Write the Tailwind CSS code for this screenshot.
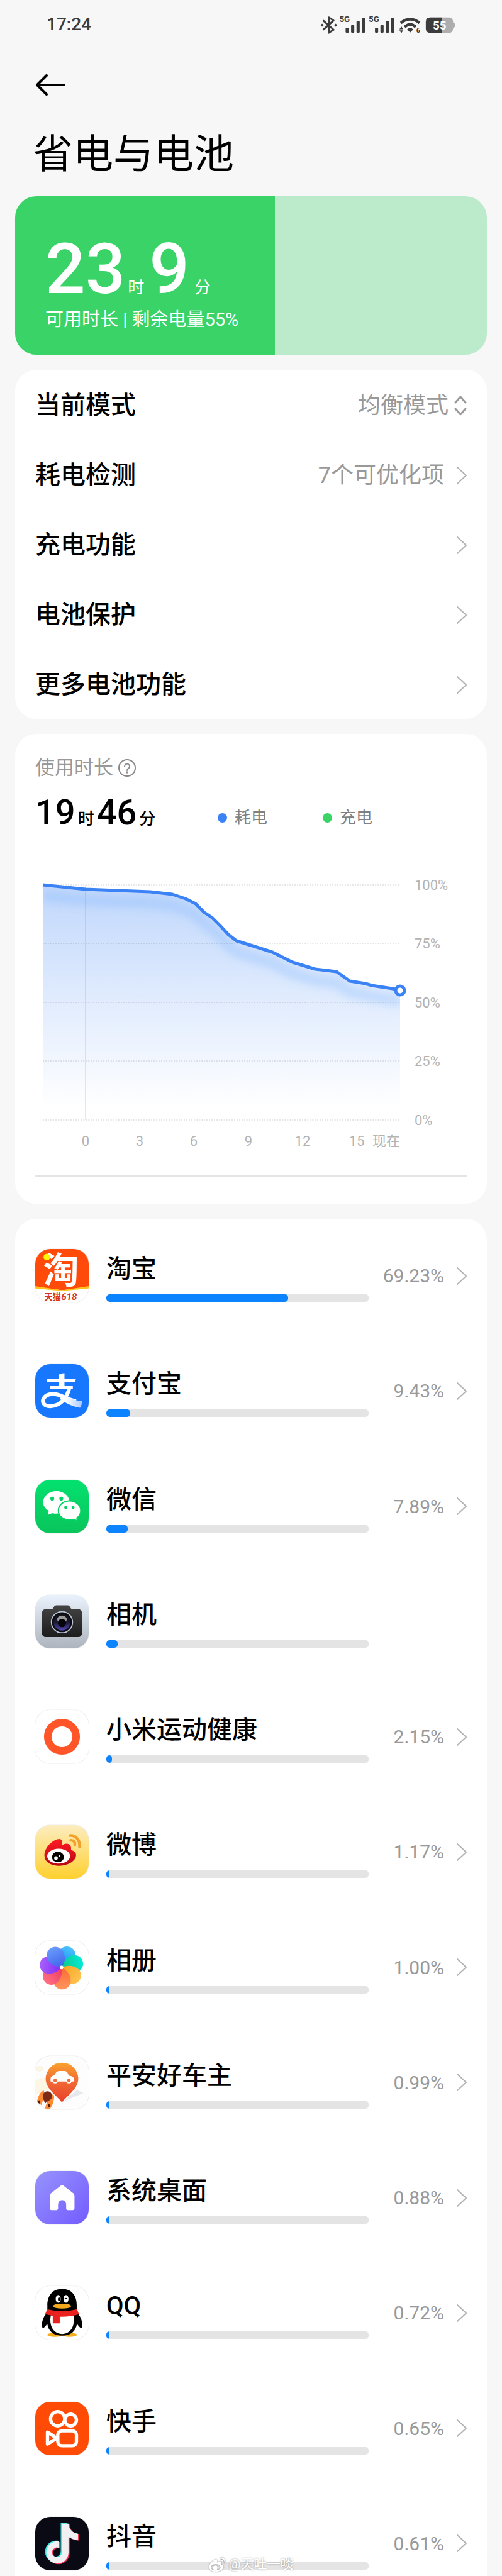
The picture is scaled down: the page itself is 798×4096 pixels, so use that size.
<!DOCTYPE html>
<html lang="zh-CN">
<head>
    <meta charset="UTF-8">
    <meta name="viewport" content="width=device-width, initial-scale=1.0">
    <title>省电与电池</title>
    <script src="https://cdn.jsdelivr.net/npm/@tailwindcss/browser@4"></script>
</head>
<body class="bg-[#f7f7f7] text-black font-['Roboto','Noto_Sans_CJK_SC',sans-serif]">
    <!-- Icon sprites -->
    <svg class="absolute size-0" aria-hidden="true">
        <defs>
            <linearGradient id="g-wechat" x1="0" y1="0" x2="0" y2="1"><stop offset="0" stop-color="#03e16f"/><stop offset="1" stop-color="#0ac55b"/></linearGradient>
            <linearGradient id="g-ribbon" gradientUnits="userSpaceOnUse" x1="50" y1="0" x2="334" y2="0"><stop offset="0" stop-color="#fff"/><stop offset=".6" stop-color="#fff"/><stop offset="1" stop-color="#a9cbff"/></linearGradient>
            <linearGradient id="g-camera" x1="0" y1="0" x2="0" y2="1"><stop offset="0" stop-color="#eaf2fd"/><stop offset="1" stop-color="#adb4bd"/></linearGradient>
            <linearGradient id="g-body" x1="0" y1="0" x2="0" y2="1"><stop offset="0" stop-color="#444"/><stop offset="1" stop-color="#1d1d1d"/></linearGradient>
            <linearGradient id="g-lens" x1="0" y1="0" x2="0" y2="1"><stop offset="0" stop-color="#111"/><stop offset=".5" stop-color="#1b1736"/><stop offset="1" stop-color="#5148b4"/></linearGradient>
            <linearGradient id="g-weibo" x1="0" y1="0" x2="0" y2="1"><stop offset="0" stop-color="#fdedc0"/><stop offset="1" stop-color="#fed02f"/></linearGradient>
            <linearGradient id="g-flame" x1="0" y1="0" x2="0" y2="1"><stop offset="0" stop-color="#ff1a24"/><stop offset="1" stop-color="#b90811"/></linearGradient>
            <linearGradient id="g-pin" x1="0" y1="0" x2="0" y2="1"><stop offset="0" stop-color="#fba22d"/><stop offset=".45" stop-color="#f06c35"/><stop offset="1" stop-color="#e8402a"/></linearGradient>
            <linearGradient id="g-home" x1="0" y1="0" x2="1" y2="1"><stop offset="0" stop-color="#9793fd"/><stop offset="1" stop-color="#735bff"/></linearGradient>
            <linearGradient id="p-sky" x1="0" y1="0" x2="0" y2="1"><stop offset="0" stop-color="#4fc1fb"/><stop offset="1" stop-color="#068cf8"/></linearGradient>
            <linearGradient id="p-teal" x1="0" y1="0" x2="0" y2="1"><stop offset="0" stop-color="#04ead9"/><stop offset="1" stop-color="#0cc684"/></linearGradient>
            <linearGradient id="p-yellow" x1="0" y1="0" x2="0" y2="1"><stop offset="0" stop-color="#ffc353"/><stop offset="1" stop-color="#f9a41d"/></linearGradient>
            <linearGradient id="p-orange" x1="0" y1="0" x2="0" y2="1"><stop offset="0" stop-color="#ff955d"/><stop offset="1" stop-color="#fb6a35"/></linearGradient>
            <linearGradient id="p-pink" x1="0" y1="0" x2="0" y2="1"><stop offset="0" stop-color="#ff7184"/><stop offset="1" stop-color="#ee3a5f"/></linearGradient>
            <linearGradient id="p-purple" x1="0" y1="0" x2="0" y2="1"><stop offset="0" stop-color="#a960fd"/><stop offset="1" stop-color="#812df4"/></linearGradient>
            <linearGradient id="p-blue" x1="0" y1="0" x2="0" y2="1"><stop offset="0" stop-color="#699bfd"/><stop offset="1" stop-color="#3f64ea"/></linearGradient>
            <path id="petal" d="M0 0C-34-20-64-56-63-95A62 62 0 0 1 61-98C64-62 46-22 0 0Z"/>
            <path id="note" d="M191 47h48c2 40 30 70 68 72v44c-26 0-50-9-68-22v112a80 80 0 1 1-80-80l10 1v46a35 35 0 1 0 22 33Z"/>
        </defs>

        <symbol id="alipay" viewBox="0 0 384 384">
            <rect width="384" height="384" fill="#1777ff"/>
            <path d="M84 104H292Q290 128 282 128H84ZM170 78Q176 66 210 66V170H170ZM108 158H270V178H108Z" fill="#fff"/>
            <path d="M246 168C230 240 186 300 106 303 58 303 46 268 62 244 84 208 146 206 204 236 232 250 268 262 292 268" fill="none" stroke="#fff" stroke-width="28"/>
            <path d="M196 220C240 246 290 264 334 264Q338 290 322 314C270 306 216 280 176 250Z" fill="url(#g-ribbon)"/>
        </symbol>

        <symbol id="wechat" viewBox="0 0 384 384">
            <rect width="384" height="384" fill="url(#g-wechat)"/>
            <path d="M152 81c53 0 95 36 95 81s-42 81-95 81q-16 0-28-4l-34 13 7-29C72 208 57 186 57 162c0-45 42-81 95-81Z" fill="#fff"/>
            <path d="M246 151c45 0 81 31 81 70 0 22-11 41-28 53l5 22-28-12q-14 5-30 5c-45 0-80-30-80-68s35-70 80-70Z" fill="#fff" stroke="#07d266" stroke-width="9"/>
            <g fill="#07d266"><circle cx="122" cy="135" r="14"/><circle cx="187" cy="135" r="14"/><circle cx="219" cy="199" r="11"/><circle cx="272" cy="199" r="11"/></g>
        </symbol>

        <symbol id="camera" viewBox="0 0 384 384">
            <rect width="384" height="384" fill="url(#g-camera)"/>
            <path d="M78 102H118Q128 100 132 90 138 74 152 74H232Q246 74 252 90 256 100 266 102H306Q336 102 336 132V272Q336 303 306 303H78Q48 303 48 272V132Q48 102 78 102Z" fill="url(#g-body)"/>
            <circle cx="192" cy="196" r="76" fill="#0c0c10" stroke="#b9c3d6" stroke-width="8"/>
            <circle cx="192" cy="196" r="60" fill="url(#g-lens)"/>
            <ellipse cx="192" cy="176" rx="34" ry="28" fill="#9a9a9a"/>
            <circle cx="192" cy="202" r="30" fill="#050508"/>
        </symbol>

        <symbol id="fitness" viewBox="0 0 384 384">
            <rect width="384" height="384" fill="#fff"/>
            <circle cx="192" cy="192" r="102" fill="none" stroke="#ff5529" stroke-width="54"/>
        </symbol>

        <symbol id="weibo" viewBox="0 0 384 384">
            <rect width="384" height="384" fill="url(#g-weibo)"/>
            <path d="M66 218C66 160 130 98 178 100 196 104 197 118 190 144 228 122 264 132 257 180 292 188 302 212 287 240 262 275 215 294 160 292 105 288 66 262 66 218Z" fill="url(#g-flame)"/>
            <ellipse cx="168" cy="223" rx="82" ry="54" fill="#fff"/>
            <ellipse cx="163" cy="229" rx="43" ry="38" fill="#000"/>
            <circle cx="149" cy="237" r="13" fill="#fff"/><circle cx="174" cy="223" r="6" fill="#fff"/>
            <path d="M249 75C294 72 322 108 318 155M255 109C276 108 288 122 284 144" fill="none" stroke="#f2a22c" stroke-width="20" stroke-linecap="round"/>
        </symbol>

        <symbol id="album" viewBox="0 0 384 384">
            <rect width="384" height="384" fill="#fff"/>
            <g transform="translate(189 191)">
                <use href="#petal" fill="url(#p-sky)" transform="rotate(24)"/>
                <use href="#petal" fill="url(#p-teal)" transform="rotate(75)"/>
                <use href="#petal" fill="url(#p-yellow)" transform="rotate(127)"/>
                <use href="#petal" fill="url(#p-orange)" transform="rotate(178)"/>
                <use href="#petal" fill="url(#p-pink)" transform="rotate(230)"/>
                <use href="#petal" fill="url(#p-purple)" transform="rotate(281)"/>
                <use href="#petal" fill="url(#p-blue)" transform="rotate(333)"/>
                <circle r="13" fill="#fff"/>
            </g>
        </symbol>

        <symbol id="pingan" viewBox="0 0 384 384">
            <rect width="384" height="384" fill="#fdfdfd"/>
            <ellipse cx="30" cy="92" rx="30" ry="20" fill="#fbf5e6"/><path d="M0 180Q40 150 84 160L96 240 0 280Z" fill="#fdf6e4"/>
            <path d="M196 330L300 245 345 268Z" fill="#e6e8ec"/>
            <path d="M192 335C170 298 75 240 75 165A117 117 0 0 1 309 165C309 240 214 298 192 335Z" fill="url(#g-pin)"/>
            <path d="M110 184V162Q112 144 136 140C152 112 160 108 180 108H208C228 108 236 124 241 142 270 142 284 160 280 184Z" fill="#fff"/>
            <circle cx="143" cy="176" r="22" fill="#fff"/><circle cx="242" cy="176" r="22" fill="#fff"/>
            <circle cx="143" cy="176" r="12" fill="#ef6c38"/><circle cx="242" cy="176" r="12" fill="#ef6c38"/>
            <path d="M12 330Q28 256 62 248L66 290Q56 316 44 354Z" fill="#ff8b32"/>
            <path d="M70 384Q78 326 126 276 140 280 134 312 128 354 104 384Z" fill="#ff8b32"/>
            <path d="M70 342C66 322 54 312 54 288A34 34 0 0 1 122 288C122 314 92 322 70 342Z" fill="#7d2b19"/>
            <ellipse cx="29" cy="330" rx="8" ry="12" fill="#531b0e"/><ellipse cx="99" cy="358" rx="9" ry="12" fill="#531b0e"/>
        </symbol>

        <symbol id="home" viewBox="0 0 384 384">
            <rect width="384" height="384" fill="url(#g-home)"/>
            <path d="M182 106Q193 98 204 106L274 160Q282 167 282 178V268Q282 281 268 281H235Q222 281 222 268V238A29 29 0 0 0 164 238V268Q164 281 150 281H118Q105 281 105 268V178Q105 167 113 160Z" fill="#fff"/>
        </symbol>

        <symbol id="qq" viewBox="0 0 384 384">
            <rect width="384" height="384" fill="#fff"/>
            <ellipse cx="140" cy="350" rx="54" ry="15" fill="#f6ad1b"/><ellipse cx="246" cy="350" rx="54" ry="15" fill="#f6ad1b"/>
            <path d="M87 190C54 220 42 270 52 300 62 304 76 286 86 270 96 326 130 356 193 356S290 326 300 270C310 286 324 304 334 300 344 270 332 220 298 190V140C300 66 260 20 193 20S86 66 87 140Z" fill="#000"/>
            <path d="M112 210H274C290 290 250 344 193 344S96 290 112 210Z" fill="#fff"/>
            <ellipse cx="165" cy="92" rx="18" ry="28" fill="#fff"/><ellipse cx="221" cy="92" rx="18" ry="28" fill="#fff"/>
            <ellipse cx="171" cy="94" rx="8" ry="13" fill="#000"/><path d="M210 94Q222 82 232 94" fill="none" stroke="#000" stroke-width="6"/>
            <ellipse cx="193" cy="144" rx="64" ry="18" fill="#f5a81c"/>
            <path d="M86 166Q193 196 300 166L314 202Q250 222 176 220V268H126V212Q90 208 72 200Z" fill="#e9221f"/>
        </symbol>

        <symbol id="kuaishou" viewBox="0 0 384 384">
            <rect width="384" height="384" fill="#ff4b05"/>
            <g fill="none" stroke="#fff" stroke-width="24" stroke-linejoin="round">
                <circle cx="161" cy="122" r="51"/><circle cx="254" cy="131" r="42"/>
                <rect x="162" y="208" width="134" height="108" rx="30"/>
                <path d="M88 218V304L156 262Z"/>
            </g>
        </symbol>

        <symbol id="douyin" viewBox="0 0 384 384">
            <rect width="384" height="384" fill="#0a0a14"/>
            <use href="#note" x="8" y="7" fill="#f2345e"/>
            <use href="#note" x="-8" y="-3" fill="#2eeae4"/>
            <use href="#note" x="0" y="2" fill="#f0f0f2"/>
        </symbol>
    </svg>

    <div class="relative flex min-h-screen flex-col px-6">
        <!-- Status bar -->
        <div class="flex h-[78px] items-center justify-between px-[50px] text-[#3c3c3c]">
            <span class="text-[28px] font-medium leading-8">17:24</span>
            <svg class="h-[31px] w-[215px]" viewBox="40 28 968 138" fill="#3c3c3c">
                <path d="M64 68L136 132 102 154V44L136 66 64 130" fill="none" stroke="#3c3c3c" stroke-width="13" stroke-linejoin="round" stroke-linecap="round"/>
                <path d="M54 88l11 11-11 11-11-11ZM151 88l11 11-11 11-11-11Z"/>
                <text x="177" y="77" font-size="60" font-weight="700">5G</text>
                <rect x="222" y="117" width="23" height="36" rx="7"/><rect x="261" y="97" width="23" height="56" rx="7"/><rect x="300" y="69" width="23" height="84" rx="7"/><rect x="338" y="45" width="23" height="108" rx="7"/>
                <text x="387" y="77" font-size="60" font-weight="700">5G</text>
                <rect x="432" y="117" width="23" height="36" rx="7"/><rect x="471" y="97" width="23" height="56" rx="7"/><rect x="510" y="69" width="23" height="84" rx="7"/><rect x="548" y="45" width="23" height="108" rx="7"/>
                <path d="M617 83Q684 30 751 83M644 112Q684 76 724 112" fill="none" stroke="#3c3c3c" stroke-width="20"/>
                <path d="M662 130Q684 110 706 130L684 152Z"/>
                <path d="M607 128L621 108 635 128ZM607 136L621 156 635 136Z"/>
                <text x="728" y="155" font-size="48" font-weight="700">6</text>
                <path d="M826 44H964Q990 44 992 80 1005 82 1005 99T992 118Q990 154 964 154H826Q796 154 796 124V74Q796 44 826 44Z" fill="#adadad"/>
                <path d="M826 44H911V154H826Q796 154 796 124V74Q796 44 826 44Z"/>
                <text x="846" y="130" font-size="84" font-weight="700" fill="#fff">55</text>
            </svg>
        </div>

        <!-- Title -->
        <button type="button" aria-label="返回" class="mt-10 ml-8 w-12">
            <svg class="h-[34px] w-12" viewBox="0 0 48 34" fill="none" stroke="#000" stroke-width="4" stroke-linecap="round" stroke-linejoin="round"><path d="M46 17H3M18 2L3 17L18 32"/></svg>
        </button>
        <h1 class="mt-[54px] mb-[26px] ml-7 text-[64px] leading-[80px] font-normal">省电与电池</h1>

        <!-- Battery level -->
        <section class="relative h-[252px] overflow-hidden rounded-[34px] bg-[#bcebcb] text-white">
            <div class="h-full bg-[#3ad368]" style="width:55%"></div>
            <div class="absolute inset-0 px-12 pt-[60px]">
                <div class="flex items-baseline leading-none">
                    <span class="text-[112px] font-medium">23</span>
                    <span class="ml-1 text-[26px]">时</span>
                    <span class="ml-2 text-[112px] font-medium">9</span>
                    <span class="ml-2 text-[26px]">分</span>
                </div>
                <p class="mt-2 text-[29px] leading-8">可用时长 | 剩余电量55%</p>
            </div>
        </section>

        <!-- Settings -->
        <section class="mt-6 rounded-[34px] bg-white px-8 text-[40px] font-medium">
            <div class="flex h-[111px] items-center justify-between pt-0.5">
                <label for="mode">当前模式</label>
                <div class="flex items-center gap-2 text-[36px] font-normal text-[#999]">
                    <select id="mode" class="appearance-none bg-transparent"><option>均衡模式</option></select>
                    <svg class="h-8 w-5" viewBox="0 0 20 32" fill="none" stroke="#999" stroke-width="3" stroke-linecap="round" stroke-linejoin="round"><path d="M2 11L10 2L18 11M2 21L10 30L18 21"/></svg>
                </div>
            </div>
            <a href="#" class="flex h-[111px] items-center pt-0.5">
                <span class="flex-1">耗电检测</span>
                <span class="mr-5 text-[36px] font-normal text-[#999]">7个可优化项</span>
                <svg class="h-7 w-4" viewBox="0 0 16 28" fill="none" stroke="#b3b3b3" stroke-width="2" stroke-linecap="round" stroke-linejoin="round"><path d="M1 1L15 14L1 27"/></svg>
            </a>
            <a href="#" class="flex h-[111px] items-center justify-between pt-0.5">
                <span>充电功能</span>
                <svg class="h-7 w-4" viewBox="0 0 16 28" fill="none" stroke="#b3b3b3" stroke-width="2" stroke-linecap="round" stroke-linejoin="round"><path d="M1 1L15 14L1 27"/></svg>
            </a>
            <a href="#" class="flex h-[111px] items-center justify-between pt-0.5">
                <span>电池保护</span>
                <svg class="h-7 w-4" viewBox="0 0 16 28" fill="none" stroke="#b3b3b3" stroke-width="2" stroke-linecap="round" stroke-linejoin="round"><path d="M1 1L15 14L1 27"/></svg>
            </a>
            <a href="#" class="flex h-[111px] items-center justify-between pt-0.5">
                <span>更多电池功能</span>
                <svg class="h-7 w-4" viewBox="0 0 16 28" fill="none" stroke="#b3b3b3" stroke-width="2" stroke-linecap="round" stroke-linejoin="round"><path d="M1 1L15 14L1 27"/></svg>
            </a>
        </section>

        <!-- Usage chart -->
        <section class="mt-6 rounded-[34px] bg-white px-8 pt-[34px] pb-[43px]">
            <div class="flex h-10 items-center gap-2 text-[31px] text-[#999]">
                <h2>使用时长</h2>
                <svg class="size-7" viewBox="0 0 28 28" fill="none" stroke="#888" stroke-width="2" stroke-linecap="round"><circle cx="14" cy="14" r="13"/><path d="M10 11.500a4 4 0 1 1 6 3.500q-2 1-2 3"/><circle cx="14" cy="21" r=".7"/></svg>
            </div>
            <div class="mt-[23px] flex h-[58px] items-start">
                <div class="flex w-[290px] items-baseline leading-none">
                    <span class="text-[56px] font-medium">19</span>
                    <span class="ml-1 text-[26px] font-medium">时</span>
                    <span class="ml-1 text-[56px] font-medium">46</span>
                    <span class="ml-1 text-[26px] font-medium">分</span>
                </div>
                <div class="flex w-[167px] items-center gap-3 pt-4 text-[26px] leading-10 text-[#808080]"><span class="size-[15px] rounded-full bg-[#3b82f5]"></span>耗电</div>
                <div class="flex items-center gap-3 pt-4 text-[26px] leading-10 text-[#808080]"><span class="size-[15px] rounded-full bg-[#3ad368]"></span>充电</div>
            </div>
            <svg class="mt-[70px] block w-full" viewBox="0 0 686 440">
                <defs>
                    <linearGradient id="fade" x1="0" y1="0" x2="0" y2="1"><stop offset="0" stop-color="#3b82f5" stop-opacity=".32"/><stop offset=".95" stop-color="#3b82f5" stop-opacity="0"/></linearGradient>
                    <path id="curve" d="M0 0L68 7L171 11L206 15L227 22L243 30L257 44L269 52L283 66L295 79L308 89L340 99L365 107L397 123L433 134L467 138L488 153L513 157L523 160L556 165L568 168"/>
                    <clipPath id="under"><path d="M0 0L68 7L171 11L206 15L227 22L243 30L257 44L269 52L283 66L295 79L308 89L340 99L365 107L397 123L433 134L467 138L488 153L513 157L523 160L556 165L568 168V374H0Z"/></clipPath>
                    <filter id="soft" x="-10%" y="-20%" width="120%" height="160%"><feGaussianBlur stdDeviation="7"/></filter>
                </defs>
                <g transform="translate(12 15)">
                    <rect width="568" height="374" fill="url(#fade)" clip-path="url(#under)"/>
                    <g clip-path="url(#under)"><use href="#curve" y="18" fill="none" stroke="#6fb0fb" stroke-opacity=".3" stroke-width="16" filter="url(#soft)"/></g>
                    <path d="M0 0H568M0 93H568M0 187H568M0 280H568M0 374H568" stroke="#000" stroke-opacity=".18" stroke-width="1" stroke-dasharray="2 2"/>
                    <path d="M68 0V374" stroke="#5a78b4" stroke-opacity=".35"/>
                    <use href="#curve" fill="none" stroke="#3b82f5" stroke-width="5" stroke-linejoin="round"/>
                    <circle cx="568" cy="168" r="7" fill="#fff" stroke="#3b82f5" stroke-width="5"/>
                </g>
                <g font-size="22" fill="#b3b3b3">
                    <text x="603" y="23">100%</text><text x="603" y="116">75%</text><text x="603" y="210">50%</text><text x="603" y="303">25%</text><text x="603" y="397">0%</text>
                    <g text-anchor="middle"><text x="80" y="430">0</text><text x="166" y="430">3</text><text x="252" y="430">6</text><text x="339" y="430">9</text><text x="425" y="430">12</text><text x="511" y="430">15</text></g>
                    <text x="580" y="430" text-anchor="end">现在</text>
                </g>
            </svg>
            <hr class="mt-[37px] border-t-2 border-[#e5e5e5]">
        </section>

        <!-- Per-app usage -->
        <section id="apps" class="mt-6 flex flex-1 flex-col justify-between rounded-t-[34px] bg-white px-8 pt-12 pb-[9px]"></section>

        <!-- Watermark -->
        <div class="absolute inset-x-0 bottom-1 flex h-7 items-center justify-center gap-1 text-[21px] text-white [text-shadow:0_0_3px_#888]">
            <svg class="h-6 w-7 drop-shadow-[0_0_1px_#777]" viewBox="60 60 280 240" fill="#fff">
                <path fill-rule="evenodd" d="M66 218C66 160 130 98 178 100 196 104 197 118 190 144 228 122 264 132 257 180 292 188 302 212 287 240 262 275 215 294 160 292 105 288 66 262 66 218ZM90 223a78 50 0 1 0 156 0 78 50 0 1 0-156 0Z"/>
                <circle cx="163" cy="229" r="36"/>
                <path d="M249 75C294 72 322 108 318 155M255 109C276 108 288 122 284 144" fill="none" stroke="#fff" stroke-width="18" stroke-linecap="round"/>
            </svg>
            <span>@天吐一啖</span>
        </div>
    </div>

    <script>
        const taobao = `
            <rect width="384" height="384" fill="#fff"/>
            <path d="M0 0H384V272L192 296 0 272Z" fill="#ff4a0a"/>
            <path d="M0 267L192 296 384 267V284L192 302 0 284Z" fill="#ffc21c"/>
            <text x="58" y="242" font-size="256" font-weight="700" fill="#fff">淘</text>
            <circle cx="83" cy="58" r="24" fill="#fff600"/>
            <text x="66" y="368" font-size="60" font-weight="700" fill="#d9341c">天猫<tspan font-style="italic" font-size="68">618</tspan></text>`;

        const apps = [
            { icon: 'taobao', name: '淘宝', percent: '69.23%', bar: 69.2 },
            { icon: 'alipay', name: '支付宝', percent: '9.43%', bar: 9.2 },
            { icon: 'wechat', name: '微信', percent: '7.89%', bar: 8.2 },
            { icon: 'camera', name: '相机', percent: '', bar: 4.2 },
            { icon: 'fitness', name: '小米运动健康', percent: '2.15%', bar: 2.1 },
            { icon: 'weibo', name: '微博', percent: '1.17%', bar: 1.1 },
            { icon: 'album', name: '相册', percent: '1.00%', bar: 1.1 },
            { icon: 'pingan', name: '平安好车主', percent: '0.99%', bar: 1.1 },
            { icon: 'home', name: '系统桌面', percent: '0.88%', bar: 1.1 },
            { icon: 'qq', name: 'QQ', percent: '0.72%', bar: 1.1 },
            { icon: 'kuaishou', name: '快手', percent: '0.65%', bar: 1.1 },
            { icon: 'douyin', name: '抖音', percent: '0.61%', bar: 1.1 }
        ];

        document.getElementById('apps').innerHTML = apps.map(app => `
            <a href="#" class="flex h-[85px]">
                <svg class="size-[85px] rounded-[24px] shadow-[0_0_1px_#999]" viewBox="0 0 384 384">${app.icon === 'taobao' ? taobao : `<use href="#${app.icon}"/>`}</svg>
                <div class="ml-7 flex-1">
                    <div class="pt-1 text-[40px] leading-[56px] font-medium">${app.name}</div>
                    <div class="mt-3 h-3 overflow-hidden rounded-[5px] bg-[#e4e4e4]">
                        <div class="h-full rounded-[5px] bg-[#0d84ff]" style="width:${app.bar}%"></div>
                    </div>
                </div>
                <div class="flex w-[156px] items-center justify-end gap-5 text-[30px] text-[#999]">
                    ${app.percent ? `<span>${app.percent}</span>
                    <svg class="h-7 w-4" viewBox="0 0 16 28" fill="none" stroke="#b3b3b3" stroke-width="2" stroke-linecap="round" stroke-linejoin="round"><path d="M1 1L15 14L1 27"/></svg>` : ''}
                </div>
            </a>
        `).join('');
    </script>
</body>
</html>
